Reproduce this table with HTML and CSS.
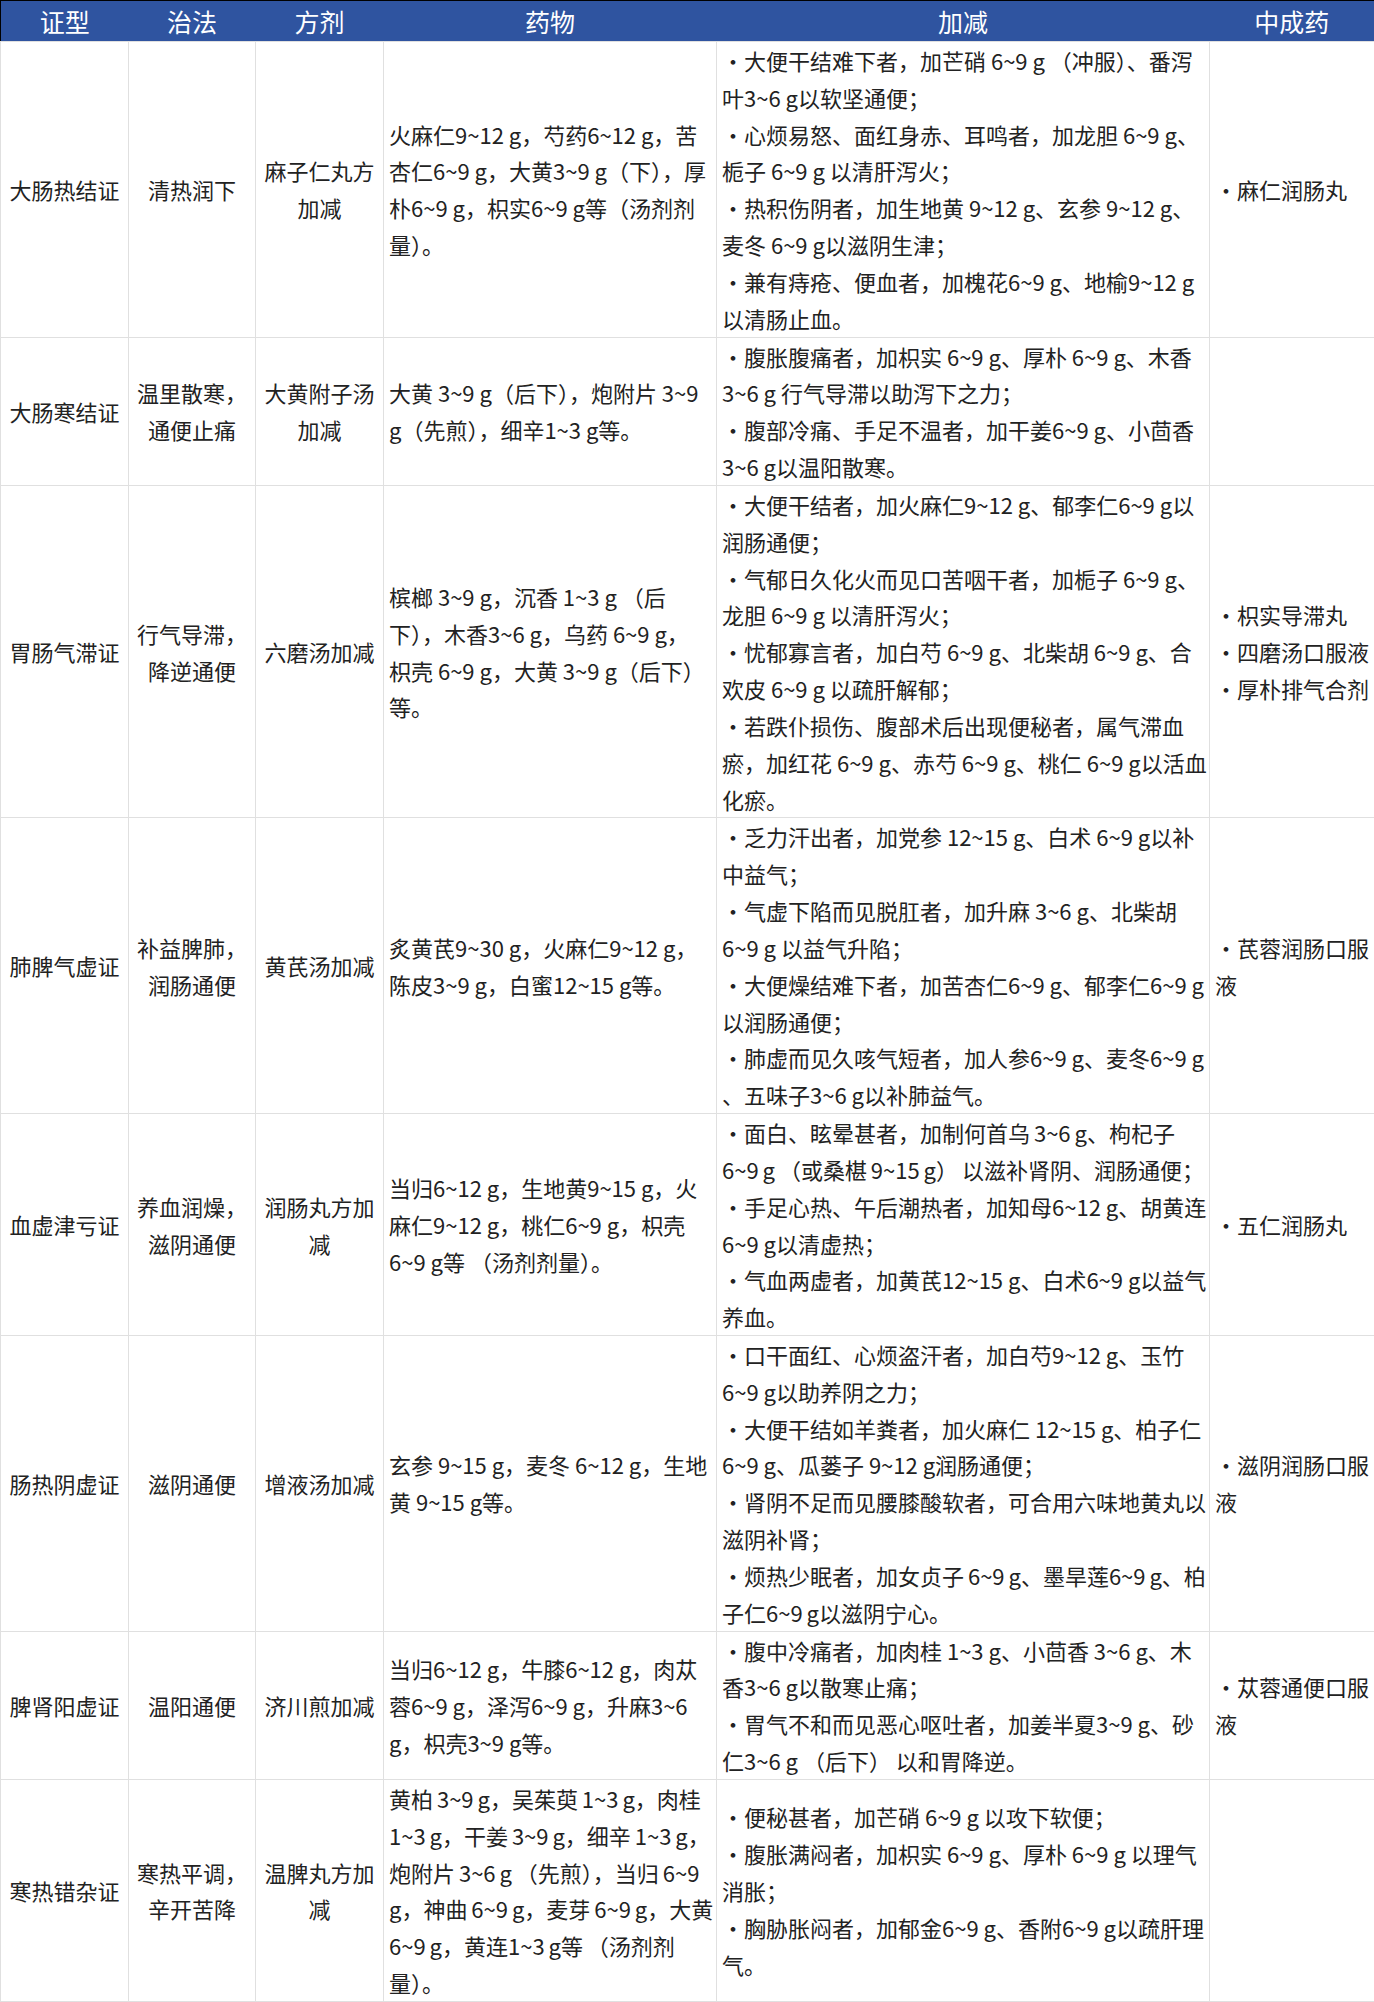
FILE: index.html
```html
<!DOCTYPE html>
<html lang="zh-CN">
<head>
<meta charset="utf-8">
<title>便秘辨证论治</title>
<link rel="stylesheet" href="styles.css">
</head>
<body>
<table class="tcm">
  <colgroup>
    <col class="c1"><col class="c2"><col class="c3"><col class="c4"><col class="c5"><col class="c6">
  </colgroup>
  <thead>
    <tr>
      <th>证型</th><th>治法</th><th>方剂</th><th>药物</th><th>加减</th><th>中成药</th>
    </tr>
  </thead>
  <tbody>
    <tr>
      <td class="ctr">大肠热结证</td>
      <td class="ctr">清热润下</td>
      <td class="ctr">麻子仁丸方加减</td>
      <td class="txt">火麻仁9~12 g，芍药6~12 g，苦杏仁6~9 g，大黄3~9 g（下），厚朴6~9 g，枳实6~9 g等（汤剂剂量）。</td>
      <td class="txt adj">
        <div>・大便干结难下者，加芒硝 6~9 g （冲服）、番泻<span class="nw">叶3~6</span> g以软坚通便；</div>
        <div>・心烦易怒、面红身赤、耳鸣者，加龙胆 6~9 g、栀子 6~9 g 以清肝泻火；</div>
        <div>・热积伤阴者，加生地黄 9~12 g、玄参 9~12 g、麦冬 6~9 g以滋阴生津；</div>
        <div>・兼有痔疮、便血者，加槐花6~9 g、地榆9~12 g以清肠止血。</div>
      </td>
      <td class="txt"><div>・麻仁润肠丸</div></td>
    </tr>
    <tr>
      <td class="ctr">大肠寒结证</td>
      <td class="ctr">温里散寒，通便止痛</td>
      <td class="ctr">大黄附子汤加减</td>
      <td class="txt">大黄 3~9 g（后下），炮附片 3~9 g（先煎），细辛1~3 g等。</td>
      <td class="txt adj">
        <div>・腹胀腹痛者，加枳实 6~9 g、厚朴 6~9 g、木香 3~6 g 行气导滞以助泻下之力；</div>
        <div>・腹部冷痛、手足不温者，加干姜6~9 g、小茴香 3~6 g以温阳散寒。</div>
      </td>
      <td class="txt"></td>
    </tr>
    <tr>
      <td class="ctr">胃肠气滞证</td>
      <td class="ctr">行气导滞，降逆通便</td>
      <td class="ctr">六磨汤加减</td>
      <td class="txt">槟榔 3~9 g，沉香 1~3 g （后下），木香3~6 g，乌药 6~9 g，<span class="nw">枳壳</span> 6~9 g，大黄 3~9 g（后下）等。</td>
      <td class="txt adj">
        <div>・大便干结者，加火麻仁9~12 g、郁李仁6~9 g以润肠通便；</div>
        <div>・气郁日久化火而见口苦咽干者，加栀子 6~9 g、龙胆 6~9 g 以清肝泻火；</div>
        <div>・忧郁寡言者，加白芍 6~9 g、北柴胡 6~9 g、合欢皮 6~9 g 以疏肝解郁；</div>
        <div>・若跌仆损伤、腹部术后出现便秘者，属气滞血瘀，加红花 6~9 g、赤芍 6~9 g、桃仁 6~9 g以活血化瘀。</div>
      </td>
      <td class="txt">
        <div>・枳实导滞丸</div>
        <div>・四磨汤口服液</div>
        <div>・厚朴排气合剂</div>
      </td>
    </tr>
    <tr>
      <td class="ctr">肺脾气虚证</td>
      <td class="ctr">补益脾肺，润肠通便</td>
      <td class="ctr">黄芪汤加减</td>
      <td class="txt">炙黄芪9~30 g，火麻仁9~12 g，陈皮3~9 g，白蜜12~15 g等。</td>
      <td class="txt adj">
        <div>・乏力汗出者，加党参 12~15 g、白术 6~9 g以补中益气；</div>
        <div>・气虚下陷而见脱肛者，加升麻 3~6 g、北柴胡 6~9 g 以益气升陷；</div>
        <div>・大便燥结难下者，加苦杏仁6~9 g、郁李仁6~9 g 以润肠通便；</div>
        <div>・肺虚而见久咳气短者，加人参6~9 g、麦冬6~9 g<wbr>、五味子3~6 g以补肺益气。</div>
      </td>
      <td class="txt"><div>・芪蓉润肠口服液</div></td>
    </tr>
    <tr>
      <td class="ctr">血虚津亏证</td>
      <td class="ctr">养血润燥，滋阴通便</td>
      <td class="ctr">润肠丸方加减</td>
      <td class="txt">当归6~12 g，生地黄9~15 g，火麻仁9~12 g，桃仁6~9 g，枳壳6~9 g等 （汤剂剂量）。</td>
      <td class="txt adj">
        <div class="ws1">・面白、眩晕甚者，加制何首乌 3~6 g、枸杞子 6~9 g （或桑椹 9~15 g） 以滋补肾阴、润肠通便；</div>
        <div>・手足心热、午后潮热者，加知母6~12 g、胡黄连 6~9 g以清虚热；</div>
        <div>・气血两虚者，加黄芪12~15 g、白术6~9 g以益气养血。</div>
      </td>
      <td class="txt"><div>・五仁润肠丸</div></td>
    </tr>
    <tr>
      <td class="ctr">肠热阴虚证</td>
      <td class="ctr">滋阴通便</td>
      <td class="ctr">增液汤加减</td>
      <td class="txt">玄参 9~15 g，麦冬 6~12 g，生地黄 9~15 g等。</td>
      <td class="txt adj">
        <div>・口干面红、心烦盗汗者，加白芍9~12 g、玉竹 6~9 g以助养阴之力；</div>
        <div>・大便干结如羊粪者，加火麻仁 12~15 g、柏子仁 6~9 g、瓜蒌子 9~12 g润肠通便；</div>
        <div>・肾阴不足而见腰膝酸软者，可合用六味地黄丸以滋阴补肾；</div>
        <div class="ws1">・烦热少眠者，加女贞子 6~9 g、墨旱莲6~9 g、柏子仁6~9 g以滋阴宁心。</div>
      </td>
      <td class="txt"><div>・滋阴润肠口服液</div></td>
    </tr>
    <tr>
      <td class="ctr">脾肾阳虚证</td>
      <td class="ctr">温阳通便</td>
      <td class="ctr">济川煎加减</td>
      <td class="txt">当归6~12 g，牛膝6~12 g，肉苁蓉6~9 g，泽泻6~9 g，升麻3~6 g，枳壳3~9 g等。</td>
      <td class="txt adj">
        <div>・腹中冷痛者，加肉桂 1~3 g、小茴香 3~6 g、木香3~6 g以散寒止痛；</div>
        <div>・胃气不和而见恶心呕吐者，加姜半夏3~9 g、砂仁3~6 g （后下） 以和胃降逆。</div>
      </td>
      <td class="txt"><div>・苁蓉通便口服液</div></td>
    </tr>
    <tr>
      <td class="ctr">寒热错杂证</td>
      <td class="ctr">寒热平调，辛开苦降</td>
      <td class="ctr">温脾丸方加减</td>
      <td class="txt ws1">黄柏 3~9 g，吴茱萸 1~3 g，肉桂 1~3 g，干姜 3~9 g，细辛 1~3 g，炮附片 3~6 g （先煎），当归 6~9 g，神曲 6~9 g，麦芽 6~9 g，大黄 6~9 g，黄连1~3 g等 （汤剂剂量）。</td>
      <td class="txt adj">
        <div>・便秘甚者，加芒硝 6~9 g 以攻下软便；</div>
        <div>・腹胀满闷者，加枳实 6~9 g、厚朴 6~9 g 以理气消胀；</div>
        <div>・胸胁胀闷者，加郁金6~9 g、香附6~9 g以疏肝理气。</div>
      </td>
      <td class="txt"></td>
    </tr>
  </tbody>
</table>
</body>
</html>
```
FILE: styles.css
```css
html, body {
  margin: 0;
  padding: 0;
  background: #ffffff;
}

.tcm {
  width: 1374px;
  table-layout: fixed;
  border-collapse: collapse;
  border: 1px solid #000000;
  font-family: "Noto Sans CJK SC", "Noto Sans", sans-serif;
  color: #222222;
}

.c1 { width: 128px; }
.c2 { width: 127px; }
.c3 { width: 128px; }
.c4 { width: 333px; }
.c5 { width: 493px; }
.c6 { width: 165px; }

.tcm th {
  height: 40px;
  padding: 0;
  background: #2f54a0;
  color: #ffffff;
  font-size: 25px;
  font-weight: normal;
  line-height: 40px;
  text-align: center;
  border: none;
}

.tcm td {
  border: 1px solid #e0e0e0;
  padding: 0 2px 0 5px;
  font-size: 22px;
  line-height: 36.83px;
  vertical-align: middle;
}

.tcm td.ctr {
  text-align: center;
  padding: 0 5px;
}

.tcm td.txt {
  text-align: left;
}

.tcm td.adj {
  padding-right: 0;
}

.ws1 {
  word-spacing: -1px;
}

.nw {
  white-space: nowrap;
}
```
